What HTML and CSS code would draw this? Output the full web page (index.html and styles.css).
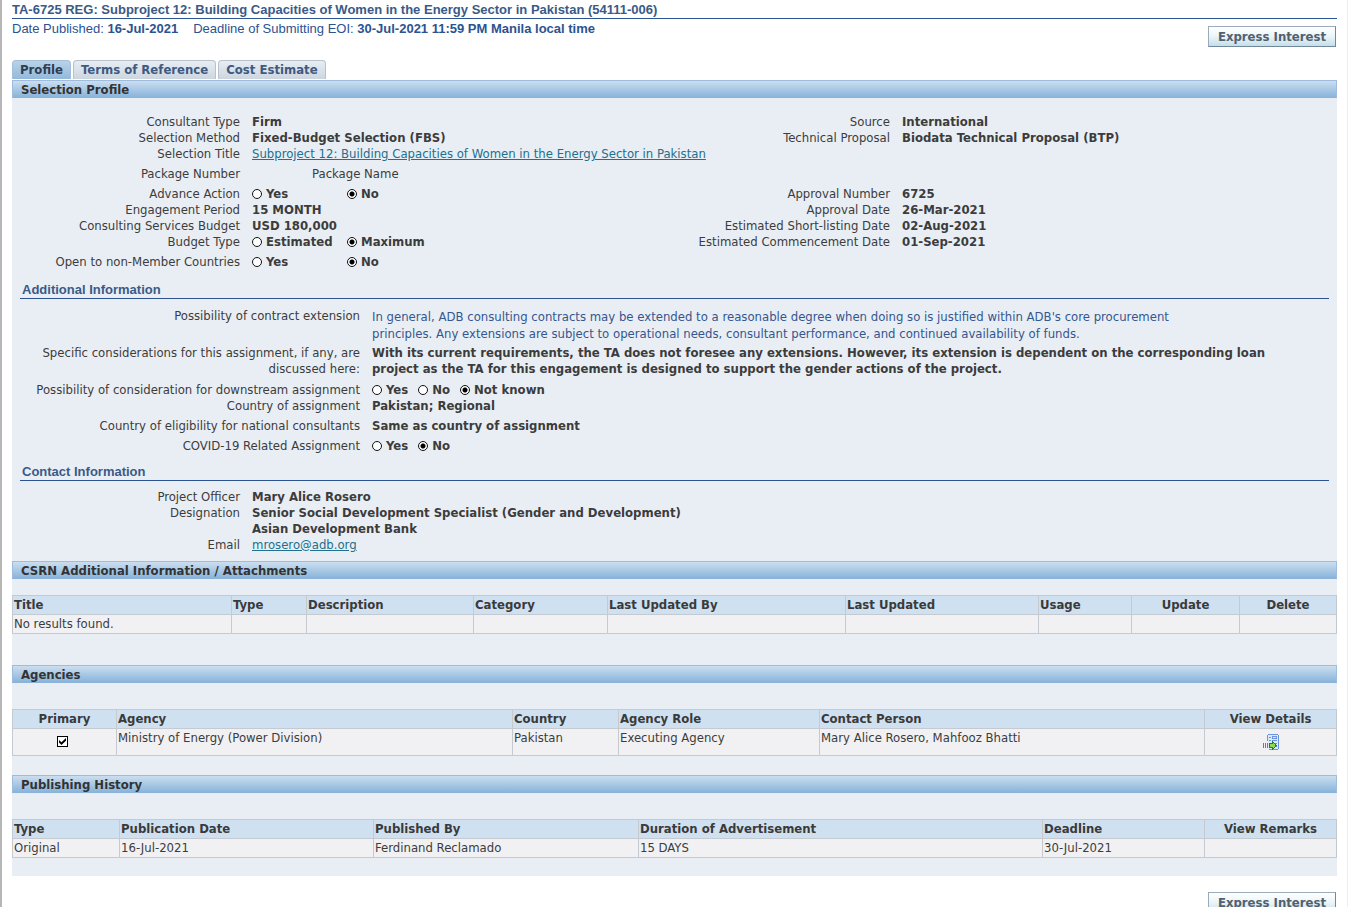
FILE: index.html
```html
<!DOCTYPE html>
<html lang="en">
<head>
<meta charset="utf-8">
<title>Selection Profile</title>
<link rel="stylesheet" href="styles.css">
</head>
<body>
<div class="page">
  <h1 class="title">TA-6725 REG: Subproject 12: Building Capacities of Women in the Energy Sector in Pakistan (54111-006)</h1>
  <div class="dates">
    <span>Date Published: <b>16-Jul-2021</b></span>
    <span>Deadline of Submitting EOI: <b>30-Jul-2021 11:59 PM Manila local time</b></span>
  </div>
  <div class="actions"><button class="btn" type="button">Express Interest</button></div>

  <nav class="tabs">
    <a class="tab tab-active" href="#profile">Profile</a>
    <a class="tab" href="#terms">Terms of Reference</a>
    <a class="tab" href="#cost">Cost Estimate</a>
  </nav>

  <main class="panel" id="profile">
    <h2 class="bar">Selection Profile</h2>
    <div class="form form-profile">
      <span class="label">Consultant Type</span><b>Firm</b>
      <span class="label">Source</span><b>International</b>
      <span class="label">Selection Method</span><b>Fixed-Budget Selection (FBS)</b>
      <span class="label">Technical Proposal</span><b>Biodata Technical Proposal (BTP)</b>
      <span class="label">Selection Title</span>
      <span class="wide"><a class="link" href="#title">Subproject 12: Building Capacities of Women in the Energy Sector in Pakistan</a></span>
      <span class="label tall">Package Number</span><span class="wide tall package">Package Name</span>
      <span class="label">Advance Action</span>
      <div class="options options-cols">
        <label class="option"><input class="radio" type="radio" name="advance">Yes</label>
        <label class="option"><input class="radio" type="radio" name="advance" checked>No</label>
      </div>
      <span class="label">Approval Number</span><b>6725</b>
      <span class="label">Engagement Period</span><b>15 MONTH</b>
      <span class="label">Approval Date</span><b>26-Mar-2021</b>
      <span class="label">Consulting Services Budget</span><b>USD 180,000</b>
      <span class="label">Estimated Short-listing Date</span><b>02-Aug-2021</b>
      <span class="label">Budget Type</span>
      <div class="options options-cols">
        <label class="option"><input class="radio" type="radio" name="budget">Estimated</label>
        <label class="option"><input class="radio" type="radio" name="budget" checked>Maximum</label>
      </div>
      <span class="label">Estimated Commencement Date</span><b>01-Sep-2021</b>
      <span class="label tall">Open to non-Member Countries</span>
      <div class="options options-cols tall">
        <label class="option"><input class="radio" type="radio" name="open">Yes</label>
        <label class="option"><input class="radio" type="radio" name="open" checked>No</label>
      </div>
    </div>

    <h3 class="subhead">Additional Information</h3>
    <div class="form form-additional">
      <span class="label">Possibility of contract extension</span>
      <p class="note">In general, ADB consulting contracts may be extended to a reasonable degree when doing so is justified within ADB's core procurement principles. Any extensions are subject to operational needs, consultant performance, and continued availability of funds.</p>
      <span class="label">Specific considerations for this assignment, if any, are discussed here:</span>
      <p class="remark">With its current requirements, the TA does not foresee any extensions. However, its extension is dependent on the corresponding loan project as the TA for this engagement is designed to support the gender actions of the project.</p>
      <span class="label">Possibility of consideration for downstream assignment</span>
      <div class="options">
        <label class="option"><input class="radio" type="radio" name="downstream">Yes</label>
        <label class="option"><input class="radio" type="radio" name="downstream">No</label>
        <label class="option"><input class="radio" type="radio" name="downstream" checked>Not known</label>
      </div>
      <span class="label">Country of assignment</span><b>Pakistan; Regional</b>
      <span class="label tall">Country of eligibility for national consultants</span><b class="tall">Same as country of assignment</b>
      <span class="label">COVID-19 Related Assignment</span>
      <div class="options">
        <label class="option"><input class="radio" type="radio" name="covid">Yes</label>
        <label class="option"><input class="radio" type="radio" name="covid" checked>No</label>
      </div>
    </div>

    <h3 class="subhead">Contact Information</h3>
    <div class="form form-contact">
      <span class="label">Project Officer</span><b>Mary Alice Rosero</b>
      <span class="label">Designation</span><b>Senior Social Development Specialist (Gender and Development)<br>Asian Development Bank</b>
      <span class="label">Email</span><span><a class="link" href="mailto:mrosero@adb.org">mrosero@adb.org</a></span>
    </div>

    <h2 class="bar">CSRN Additional Information / Attachments</h2>
    <table class="grid grid-attachments">
      <colgroup><col class="w219"><col class="w75"><col class="w167"><col class="w134"><col class="w238"><col class="w193"><col class="w93"><col class="w108"><col class="w97"></colgroup>
      <thead><tr><th>Title</th><th>Type</th><th>Description</th><th>Category</th><th>Last Updated By</th><th>Last Updated</th><th>Usage</th><th class="center">Update</th><th class="center">Delete</th></tr></thead>
      <tbody><tr><td>No results found.</td><td></td><td></td><td></td><td></td><td></td><td></td><td></td><td></td></tr></tbody>
    </table>

    <h2 class="bar">Agencies</h2>
    <table class="grid grid-agencies">
      <colgroup><col class="w104"><col class="w396"><col class="w106"><col class="w201"><col class="w385"><col class="w132"></colgroup>
      <thead><tr><th class="center">Primary</th><th>Agency</th><th>Country</th><th>Agency Role</th><th>Contact Person</th><th class="center">View Details</th></tr></thead>
      <tbody><tr>
        <td class="primary"><input class="check" type="checkbox" aria-label="Primary" checked></td>
        <td>Ministry of Energy (Power Division)</td><td>Pakistan</td><td>Executing Agency</td><td>Mary Alice Rosero, Mahfooz Bhatti</td>
        <td class="details"><a class="icon-link" href="#details" aria-label="View Details">
          <svg class="icon" viewBox="0 0 16 16" shape-rendering="crispEdges">
            <rect x="5" y="1" width="10" height="14" fill="#dce9fc"/>
            <path d="M5 0h10v1H5zM15 1h1v14h-1zM6 15h9v1H6zM4 1h1v6H4z" fill="#6a95dc"/>
            <path d="M6 3h2v1H6zM6 6h2v1H6zM9 2h5v1H9zM9 4h5v1H9zM9 3h1v1H9zM13 3h1v1h-1zM9 6h5v1H9zM12 9h2v1h-2zM13 12h1v1h-1z" fill="#6a95dc"/>
            <path d="M0 9h1v5H0zM2 9h1v5H2zM4 9h1v5H4z" fill="#46a524"/>
            <path d="M6 9h3V7h1v1h1v1h1v1h1v1h1v1h-1v1h-1v1h-1v1h-1v1H9v-2H6z" fill="#28801d"/>
            <path d="M7 10h3V9h1v1h1v3h-1v1h-1v-1H7z" fill="#8edb4b"/>
          </svg></a></td>
      </tr></tbody>
    </table>

    <h2 class="bar">Publishing History</h2>
    <table class="grid grid-history">
      <colgroup><col class="w107"><col class="w254"><col class="w265"><col class="w404"><col class="w162"><col class="w132"></colgroup>
      <thead><tr><th>Type</th><th>Publication Date</th><th>Published By</th><th>Duration of Advertisement</th><th>Deadline</th><th class="center">View Remarks</th></tr></thead>
      <tbody><tr><td>Original</td><td>16-Jul-2021</td><td>Ferdinand Reclamado</td><td>15 DAYS</td><td>30-Jul-2021</td><td></td></tr></tbody>
    </table>
  </main>
  <div class="actions actions-bottom"><button class="btn" type="button">Express Interest</button></div>
</div>
</body>
</html>
```
FILE: styles.css
```css
* { box-sizing: border-box; }
html { scrollbar-width: none; }
body {
  margin: 0;
  background: #fff;
  color: #3c3c3c;
  font: 13px/16px "DejaVu Sans Condensed", "DejaVu Sans", Tahoma, sans-serif;
}
h1, h2, h3, p { margin: 0; }

.page {
  min-height: 100vh;
  padding: 2px 10px 0;
  border-left: 2px solid #b6b6b6;
  border-right: 1px solid #eee;
}
.title {
  border-bottom: 1px solid #2b5391;
  color: #3a5a87;
  font: bold 13px/16px "Liberation Sans", Arial, sans-serif;
}
.dates {
  display: flex;
  gap: 15px;
  padding-top: 2px;
  color: #2b5391;
  font: 13px/15px "Liberation Sans", Arial, sans-serif;
}
.actions {
  display: flex;
  justify-content: flex-end;
  margin-top: -10px;
  padding-right: 1px;
}
.actions-bottom { margin-top: 16px; }
.btn {
  height: 21px;
  padding: 0 9px;
  border: 1px solid #72879c;
  border-top-color: #9aabb9;
  border-left-color: #9aabb9;
  border-radius: 0;
  background: linear-gradient(#fff, #eaf5f8 50%, #c4dfe8);
  color: #52606f;
  font: inherit;
  font-weight: bold;
}

.tabs { display: flex; gap: 2px; margin-top: 13px; }
.tab {
  height: 19px;
  padding: 0 7px;
  border: 1px solid #b9c0c8;
  border-bottom: 0;
  border-radius: 4px 4px 0 0;
  background: linear-gradient(#e6edf5, #cdd6df);
  color: #3f5a80;
  font-weight: bold;
  line-height: 18px;
  text-decoration: none;
}
.tab-active {
  border-color: #a3bfda;
  background: linear-gradient(#b9d2e9, #93b9db);
  color: #2f3e50;
}

.panel { margin-top: 1px; padding-bottom: 18px; background: #e9eef5; }
.bar {
  height: 18px;
  padding-left: 8px;
  border: 1px solid #9fbcdc;
  border-bottom-color: #8bb2d8;
  background: linear-gradient(#cbdef0, #8ab4da);
  color: #333;
  font-size: 13px;
  line-height: 18px;
}
.form { display: grid; column-gap: 12px; }
.form-profile {
  grid-template-columns: 228fr 398fr 228fr 435fr;
  padding: 16px 0 8px;
}
.form-additional {
  grid-template-columns: 348px 1fr;
  padding: 9px 0 10px;
}
.form-contact { grid-template-columns: 228px 1fr; padding: 8px 0; }
.label { text-align: right; }
.wide { grid-column: 2 / -1; }
.tall { line-height: 24px; }
.package { padding-left: 60px; }
.link { color: #21708d; }
.options { display: flex; gap: 10px; font-weight: bold; }
.options-cols { display: grid; grid-template-columns: 85px 1fr; }
.option { display: flex; align-items: center; gap: 4px; }
.radio {
  appearance: none;
  width: 10px;
  height: 10px;
  margin: 0;
  border: 1px solid #111;
  border-radius: 50%;
  background: #fff;
}
.radio:checked { background: radial-gradient(circle, #000 2px, #fff 3px); }
.subhead {
  margin: 0 8px;
  padding-left: 2px;
  border-bottom: 1px solid #2b5391;
  color: #3a5a87;
  font: bold 13px/16px "Liberation Sans", Arial, sans-serif;
}
.note { max-width: 820px; padding-bottom: 3px; color: #35568f; line-height: 17px; }
.remark { max-width: 900px; padding-bottom: 5px; font-weight: bold; }

.grid {
  width: 100%;
  border-collapse: collapse;
  table-layout: fixed;
}
.grid-attachments { margin: 16px 0 31px; }
.grid-agencies { margin: 26px 0 19px; }
.grid-history { margin-top: 26px; }
.grid th, .grid td {
  height: 19px;
  padding: 0 1px;
  border: 1px solid #c5c9d0;
  text-align: left;
  vertical-align: top;
  line-height: 18px;
}
.grid th { background: #cfe0f0; color: #3a3a3a; }
.grid td { background: #f1f1f4; }
.grid .center { text-align: center; }
.grid .primary { padding: 7px 4px 8px 0; text-align: center; line-height: 11px; }
.grid .details { padding: 5px 0; text-align: center; line-height: 16px; }
.check {
  display: block;
  appearance: none;
  width: 11px;
  height: 11px;
  margin: 0 auto;
  border: 1px solid #000;
  background: #fff;
}
.check:checked::before {
  content: "";
  display: block;
  width: 7px;
  height: 7px;
  margin: 1px;
  background: #000;
  clip-path: polygon(0 30%, 35% 60%, 100% 0, 100% 38%, 35% 100%, 0 66%);
}
.icon { display: block; width: 16px; height: 16px; margin: 0 auto; }
.w75 { width: 75px; }
.w93 { width: 93px; }
.w97 { width: 97px; }
.w104 { width: 104px; }
.w106 { width: 106px; }
.w107 { width: 107px; }
.w108 { width: 108px; }
.w132 { width: 132px; }
.w134 { width: 134px; }
.w162 { width: 162px; }
.w167 { width: 167px; }
.w193 { width: 193px; }
.w201 { width: 201px; }
.w219 { width: 219px; }
.w238 { width: 238px; }
.w254 { width: 254px; }
.w265 { width: 265px; }
.w385 { width: 385px; }
.w396 { width: 396px; }
.w404 { width: 404px; }
```
